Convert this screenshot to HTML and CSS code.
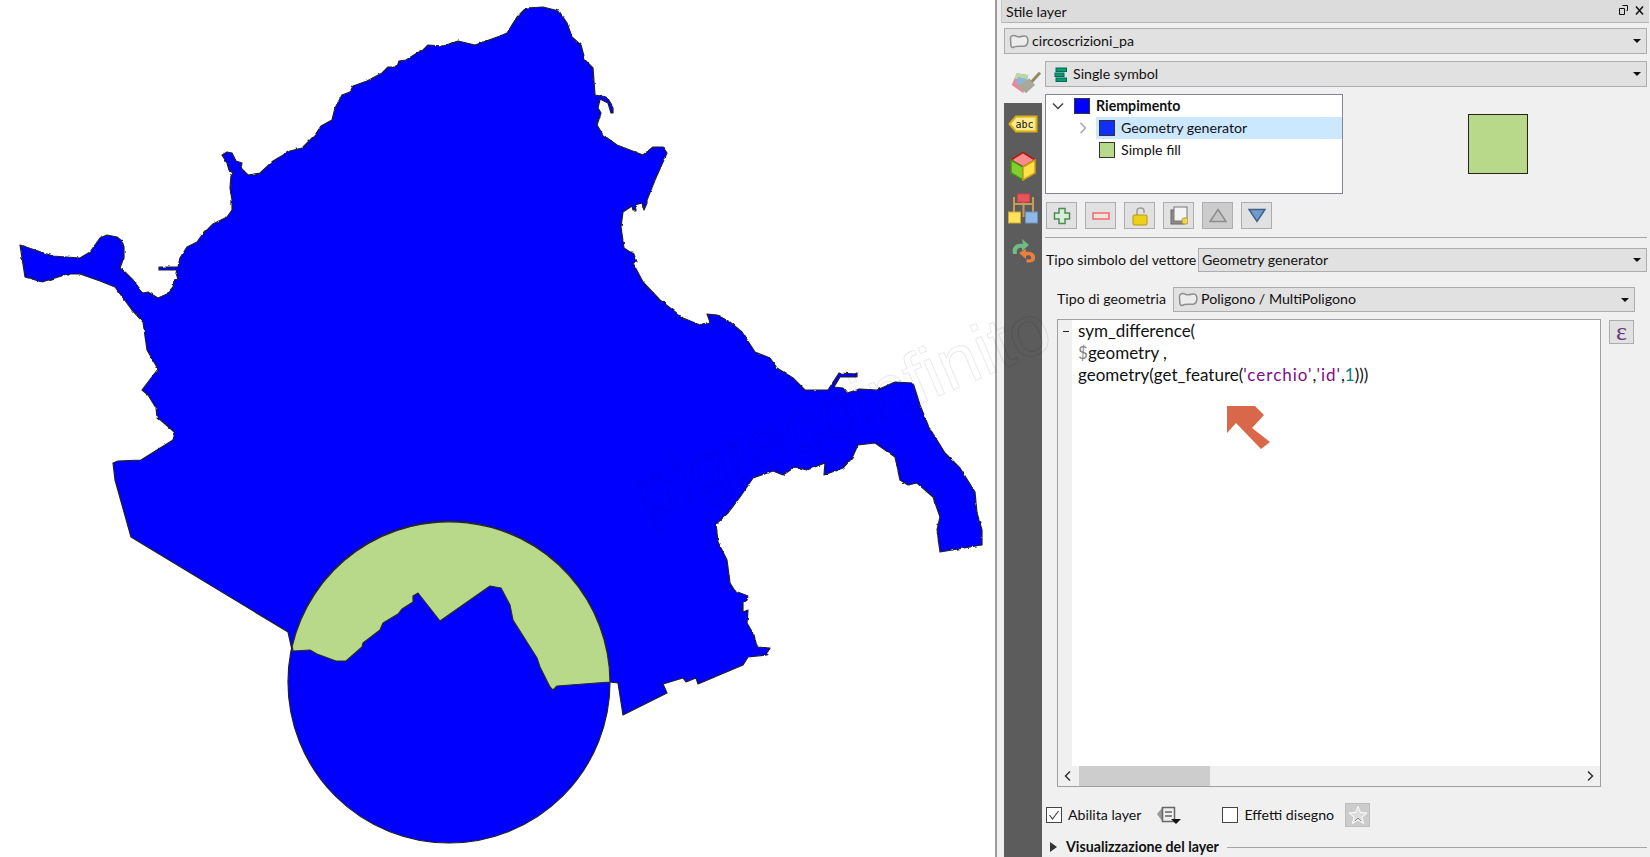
FILE: index.html
```html
<!DOCTYPE html>
<html lang="en">
<head>
    <meta charset="UTF-8">
    <meta name="viewport" content="width=device-width, initial-scale=1.0">
    <title>Stile layer</title>
    <link rel="stylesheet" href="styles.css">
</head>
<body>

    <div class="map-view">
        <svg class="map-svg" width="995" height="857" viewBox="0 0 995 857">
            <defs>
                <path id="district" d="M20 245 L53 256 L80 258 L90 252 L95 245 L100 238 L107 235 L117 237 L122 241 L124 247 L124 257 L120 268 L125 272 L133 280 L143 293 L148 292 L158 298 L167 294 L173 287 L174 280 L178 279 L176 273 L177 270 L159 270 L159 267 L178 267 L180 258 L187 247 L197 242 L202 235 L213 224 L227 217 L232 210 L232 200 L230 188 L231 176 L233 173 L229 170 L227 163 L222 155 L227 152 L232 153 L236 161 L242 163 L241 168 L248 175 L260 173 L273 161 L290 151 L302 148 L315 135 L321 126 L332 120 L335 108 L342 95 L350 92 L353 86 L367 81 L382 73 L388 67 L397 67 L399 61 L406 60 L417 53 L423 50 L428 45 L443 46 L458 41 L475 45 L500 36 L507 33 L517 17 L526 8 L543 7 L559 11 L567 23 L572 37 L581 45 L585 60 L593 68 L595 95 L607 97 L613 107 L613 113 L611 113 L608 103 L600 99 L598 108 L601 113 L597 125 L603 135 L617 145 L643 155 L653 147 L663 147 L667 153 L655 180 L647 200 L647 203 L644 210 L642 203 L635 205 L636 210 L633 210 L632 206 L623 212 L621 227 L624 248 L630 252 L633 252 L637 262 L633 263 L643 282 L660 300 L683 318 L700 325 L710 322 L707 314 L717 315 L730 322 L742 332 L755 352 L770 358 L777 368 L793 378 L805 390 L828 390 L839 373 L857 374 L857 377 L840 377 L834 387 L843 388 L847 393 L860 389 L877 390 L895 382 L913 383 L920 405 L930 430 L932 432 L945 453 L960 468 L975 492 L977 513 L982 530 L982 545 L940 552 L937 530 L940 517 L933 497 L917 483 L908 485 L900 480 L895 457 L875 443 L858 445 L852 458 L843 468 L824 475 L825 463 L807 470 L795 467 L783 475 L773 471 L753 478 L740 497 L728 513 L716 524 L718 542 L727 560 L730 583 L735 591 L748 596 L747 600 L743 603 L743 612 L748 610 L747 623 L754 635 L757 647 L770 648 L767 655 L748 657 L743 665 L698 684 L696 678 L686 682 L683 678 L663 684 L667 693 L623 715 L618 683 L610 682 L292 650 L288 632 L131 537 L115 480 L113 463 L118 461 L141 460 L173 440 L175 433 L172 430 L157 417 L156 408 L148 395 L142 390 L158 369 L147 350 L143 322 L132 310 L115 287 L100 281 L80 274 L68 274 L42 282 L25 277 Z"/>
                <!-- coast is rough, the surveyed borders are straight -->
                <filter id="rough" x="-2%" y="-2%" width="104%" height="104%" color-interpolation-filters="sRGB">
                    <feTurbulence type="fractalNoise" baseFrequency=".18" numOctaves="2" seed="4"/>
                    <feDisplacementMap in="SourceGraphic" scale="2.500" xChannelSelector="R" yChannelSelector="G"/>
                </filter>
                <clipPath id="coast-area"><path d="M0 0H995V857H760V660H600V857H300V455H0Z"/></clipPath>
                <clipPath id="border-area"><path d="M0 455H300V857H0ZM600 660H760V857H600Z"/></clipPath>
            </defs>
            <g clip-path="url(#border-area)"><use class="map-blue" href="#district"/></g>
            <g clip-path="url(#coast-area)"><use class="map-blue" href="#district" filter="url(#rough)"/></g>
            <circle class="map-blue" cx="449" cy="682" r="161"/>
            <!-- the part of the circle left after sym_difference -->
            <path class="map-green" d="M292.200 646.300 A161 161 0 0 1 610 682 L557 686 L553 690 L550 687 L540 667 L537 658 L513 620 L510 605 L501 588 L490 586 L440 621 L418 593 L413 596 L413 602 L402 609 L398 614 L383 623 L380 630 L363 643 L362 647 L346 661 L336 661 L317 654 L310 650 L293 651 Z"/>
        </svg>
    </div>

    <div class="style-dock">
        <div class="dock-title">
            <span>Stile layer</span>
            <svg class="dock-btns" width="28" height="12" viewBox="0 0 28 12">
                <path d="M3.500 .5h5v5h-1M.5 3.500h5v6h-5z" fill="none" stroke="#111"/>
                <path d="M17 1.500l7 8M24 1.500l-7 8" stroke="#111" stroke-width="1.500"/>
            </svg>
        </div>

        <div class="combo layer-combo">
            <svg class="poly-icon" width="20" height="15" viewBox="0 0 20 15"><path d="M1.500 5C1 1 5 1 8 2.500 12 4 15 .5 17.500 2.500 20 5 19 11 16 12 12 13 8 11 4 13.500 1 14 2 8 1.500 5Z"/></svg>
            <span class="txt">circoscrizioni_pa</span>
            <i class="combo-arrow"></i>
        </div>

        <div class="dock-body">
            <div class="tab-strip">
                <div class="tab tab-current">
                    <svg width="36" height="28" viewBox="0 0 36 28">
                        <path d="M6.700 17 L11.700 5.300 L23.300 7 L18.300 25.300Z" fill="#e58a98"/>
                        <path d="M9.500 10.500 L11.700 5.300 L23.300 7 L21.500 13Z" fill="#b6dba0"/>
                        <path d="M11 15 L13 9 L22 11 L20 20Z" fill="#8fb2da"/>
                        <path d="M13.300 18 L24.300 10.300 L30 17 L21 25.300Z" fill="#a9a999"/>
                        <path d="M26.700 13.700 L35 4.700" stroke="#8f8a68" stroke-width="3"/>
                    </svg>
                </div>
                <div class="tab">
                    <svg width="30" height="18" viewBox="0 0 30 18">
                        <path d="M1.500 9 L8 1.500 H28.500 V16.500 H8Z" fill="#fbe98a" stroke="#dcae13" stroke-width="2"/>
                        <text x="7.500" y="12.500" class="abc-text">abc</text>
                    </svg>
                </div>
                <div class="tab">
                    <svg width="28" height="31" viewBox="0 0 28 31">
                        <path d="M14 1.500 L26 9 L14 16 L2 9Z" fill="#fb8c8c" stroke="#b01818" stroke-width="1.500"/>
                        <path d="M2 9 L14 16 V29 L2 22Z" fill="#7fd02e" stroke="#4b8a14" stroke-width="1.500"/>
                        <path d="M26 9 L14 16 V29 L26 22Z" fill="#ffe04a" stroke="#c8a010" stroke-width="1.500"/>
                    </svg>
                </div>
                <div class="tab">
                    <svg width="31" height="31" viewBox="0 0 31 31">
                        <path d="M6 4 V20 M25 4 V20 M6 11 H25 M15.500 9 V24" fill="none" stroke="#c99a52" stroke-width="2"/>
                        <rect x="9.500" y="1" width="12" height="8" fill="#e9545c" stroke="#c44"/>
                        <rect x=".5" y="19" width="12" height="11" fill="#ffe25e" stroke="#d0a92c"/>
                        <rect x="17.500" y="19" width="12" height="11" fill="#8fb8e6" stroke="#6c92c0"/>
                    </svg>
                </div>
                <div class="tab">
                    <svg width="28" height="27" viewBox="0 0 28 27">
                        <path d="M4 17 C2 9 8 6 14 7 L13 2 L20 8 L13 14 L13 11 C9 10 7 13 8 17Z" fill="#6fbb80"/>
                        <path d="M10 16 L17 12 L17 15 C24 14 27 18 26 22 C25 26 20 26 17 25 L18 22 C21 23 23 22 22 20 C21 18 19 18 17 19 L17 22Z" fill="#ec7d3d"/>
                    </svg>
                </div>
            </div>

            <div class="dock-main">
                <div class="combo renderer-combo">
                    <svg class="renderer-icon" width="13" height="15" viewBox="0 0 13 15">
                        <rect x="2" y="1" width="10.500" height="3.500" fill="#08a060" stroke="#066"/>
                        <rect x="1" y="6" width="9" height="3.500" fill="#08a060" stroke="#066"/>
                        <rect x="2" y="11" width="10.500" height="3.500" fill="#08a060" stroke="#066"/>
                    </svg>
                    <span class="txt">Single symbol</span>
                    <i class="combo-arrow"></i>
                </div>

                <div class="symbol-row">
                    <div class="symbol-tree">
                        <div class="tree-row tree-root">
                            <svg class="tree-chevron" width="12" height="8" viewBox="0 0 12 8"><path d="M1 1.500 L6 6.500 L11 1.500" fill="none" stroke="#444" stroke-width="1.500"/></svg>
                            <i class="swatch swatch-root"></i>
                            <b class="txt">Riempimento</b>
                        </div>
                        <div class="tree-row tree-child">
                            <svg class="tree-chevron-side" width="8" height="12" viewBox="0 0 8 12"><path d="M1.500 1 L6.500 6 L1.500 11" fill="none" stroke="#a6a6a6" stroke-width="1.500"/></svg>
                            <div class="tree-label is-selected"><i class="swatch swatch-blue"></i><span class="txt">Geometry generator</span></div>
                        </div>
                        <div class="tree-row tree-child">
                            <div class="tree-label"><i class="swatch swatch-green"></i><span class="txt">Simple fill</span></div>
                        </div>
                    </div>
                    <div class="symbol-preview"><i class="preview-box"></i></div>
                </div>

                <div class="tool-row">
                    <button class="tool-btn">
                        <svg width="18" height="18" viewBox="0 0 18 18"><path d="M6 1.500h6v4.500h4.500v6H12v4.500H6V12H1.500V6H6Z" fill="#d8ecd8" stroke="#4e8a58" stroke-width="1.500"/></svg>
                    </button>
                    <button class="tool-btn">
                        <svg width="18" height="8" viewBox="0 0 18 8"><rect x="1" y="1" width="16" height="6" fill="#fde0e0" stroke="#ee6b72" stroke-width="1.500"/></svg>
                    </button>
                    <button class="tool-btn">
                        <svg width="16" height="20" viewBox="0 0 16 20"><path d="M5 10V5C5 1 12 1 12 5V7" fill="none" stroke="#999" stroke-width="1.500"/><rect x="1" y="9" width="14" height="10" rx="1" fill="#ecd01c" stroke="#b69a10"/></svg>
                    </button>
                    <button class="tool-btn">
                        <svg width="18" height="19" viewBox="0 0 18 19"><rect x="1" y="4" width="13" height="14" fill="#8d8d8d" stroke="#666"/><rect x="4" y="1" width="13" height="14" fill="#f4f4f4" stroke="#777"/><rect x="12" y="12" width="6" height="6" rx="2" fill="#efd35a" stroke="#b89b2a"/></svg>
                    </button>
                    <button class="tool-btn tool-btn-off">
                        <svg width="18" height="15" viewBox="0 0 18 15"><path d="M9 1.500 L17 13.500 H1Z" fill="#c4c4c4" stroke="#8c8c8c" stroke-width="1.500"/></svg>
                    </button>
                    <button class="tool-btn">
                        <svg width="18" height="15" viewBox="0 0 18 15"><path d="M1 1.500 H17 L9 13.500Z" fill="#6f9bd0" stroke="#3d6187" stroke-width="1.500"/></svg>
                    </button>
                </div>

                <div class="dock-line"></div>

                <div class="form-row type-row">
                    <label class="txt">Tipo simbolo del vettore</label>
                    <div class="combo type-combo"><span class="txt">Geometry generator</span><i class="combo-arrow"></i></div>
                </div>

                <div class="form-row geom-row">
                    <label class="txt">Tipo di geometria</label>
                    <div class="combo geom-combo">
                        <svg class="poly-icon" width="20" height="15" viewBox="0 0 20 15"><path d="M1.500 5C1 1 5 1 8 2.500 12 4 15 .5 17.500 2.500 20 5 19 11 16 12 12 13 8 11 4 13.500 1 14 2 8 1.500 5Z"/></svg>
                        <span class="txt">Poligono / MultiPoligono</span>
                        <i class="combo-arrow"></i>
                    </div>
                </div>

                <div class="editor-row">
                    <div class="code-editor">
                        <div class="code-area">
                            <div class="code-gutter"><span class="fold-mark"></span></div>
                            <div class="code-lines">
                                <div>sym_difference(</div>
                                <div><span class="c-var">$</span>geometry ,</div>
                                <div>geometry(get_feature(<span class="c-str">'cerchio'</span>,<span class="c-str">'id'</span>,<span class="c-num">1</span>)))</div>
                            </div>
                        </div>
                        <div class="code-scroll">
                            <svg width="20" height="20" viewBox="0 0 20 20"><path d="M12 5.500 L7.500 10 L12 14.500" fill="none" stroke="#333" stroke-width="1.500"/></svg>
                            <div class="scroll-track"><div class="scroll-thumb"></div></div>
                            <svg width="20" height="20" viewBox="0 0 20 20"><path d="M8 5.500 L12.500 10 L8 14.500" fill="none" stroke="#333" stroke-width="1.500"/></svg>
                        </div>
                    </div>
                    <button class="expr-btn">ε</button>
                </div>

                <div class="option-row">
                    <span class="check-box is-checked">
                        <svg width="14" height="14" viewBox="0 0 14 14"><path d="M2.500 7 L5.500 11 L11.500 3" fill="none" stroke="#444" stroke-width="1.200"/></svg>
                    </span>
                    <label class="option-label txt">Abilita layer</label>
                    <svg class="legend-icon" width="26" height="20" viewBox="0 0 26 20">
                        <path d="M1 9 L6 3 V16Z" fill="#999"/>
                        <rect x="6.500" y="2.500" width="12" height="14" fill="#eee" stroke="#666" stroke-width="1.500"/>
                        <path d="M9 7h7M9 11h7" stroke="#666" stroke-width="1.500"/>
                        <path d="M15 14 H25 L20 19Z" fill="#111"/>
                    </svg>
                    <span class="check-box check-effects"></span>
                    <label class="option-label txt">Effetti disegno</label>
                    <button class="star-btn">
                        <svg width="20" height="20" viewBox="0 0 20 20"><path d="M10 1.500 L12.500 7.500 L19 8 L14 12 L15.500 18.500 L10 15 L4.500 18.500 L6 12 L1 8 L7.500 7.500Z" fill="#ddd" stroke="#fff"/><path d="M7 16l3-3 3 3" fill="none" stroke="#8a8a8a"/></svg>
                    </button>
                </div>

                <div class="group-row">
                    <i class="group-arrow"></i>
                    <b class="txt">Visualizzazione del layer</b>
                    <div class="group-line"></div>
                </div>
            </div>
        </div>
    </div>

    <!-- annotation arrow and faint watermark, drawn over the whole capture -->
    <svg class="overlay" width="1650" height="857" viewBox="0 0 1650 857">
        <text class="watermark" x="647" y="520" transform="rotate(-23 647 520)">pigrecoinfinito</text>
        <path class="note-arrow" d="M1227 406 H1255 L1264 415 L1252 428 L1270 442 L1261 449 L1236 423 L1227 433Z"/>
    </svg>

</body>
</html>
```

FILE: styles.css
```css
body {
    margin: 0;
    width: 1650px;
    height: 857px;
    display: flex;
    overflow: hidden;
    background: white;
    color: #111;
    font-family: Lato, "Open Sans", sans-serif;
    font-size: 14.200px;
}

button {
    padding: 0;
    font-family: inherit;
}

/* Lato sits low in its line box */
.txt {
    padding-bottom: 2px;
}

.map-view {
    width: 995px;
    flex: none;
}

.map-svg {
    display: block;
}

.map-blue {
    fill: #0000ff;
    stroke: #222;
    stroke-width: 1.200;
    stroke-linejoin: round;
}

.map-green {
    fill: #b8d98a;
    stroke: #2a2a2a;
    stroke-width: 1.200;
    stroke-linejoin: round;
}

.style-dock {
    flex: 1;
    background: #f0f0f0;
    border-left: 2px solid #9a9aa0;
}

.dock-title {
    height: 22px;
    margin-left: 4px;
    margin-right: 1px;
    padding: 0 2px 0 4px;
    display: flex;
    align-items: center;
    justify-content: space-between;
    background: #dcdcdc;
    border-bottom: 1px solid #b4b4b4;
    border-left: 1px solid #c8c8c8;
}

.dock-btns {
    display: block;
}

/* combo boxes */
.combo {
    display: flex;
    align-items: center;
    box-sizing: border-box;
    background: #e1e1e1;
    border: 1px solid #adadad;
    padding: 0 5px 0 4px;
}

.combo-arrow {
    margin-left: auto;
    width: 0;
    height: 0;
    border-left: 4px solid transparent;
    border-right: 4px solid transparent;
    border-top: 4px solid #111;
}

.poly-icon {
    flex: none;
    margin-right: 3px;
}

.poly-icon path {
    fill: #ececec;
    stroke: #8e8e8e;
    stroke-width: 1.500;
}

.layer-combo {
    height: 26px;
    margin: 5px 3px 0 7px;
}

.dock-body {
    display: flex;
    margin-top: 7px;
    padding-left: 7px;
}

.tab-strip {
    width: 38px;
    flex: none;
    height: 796px;
    background: #5c5c5c;
}

.tab {
    height: 42px;
    display: flex;
    align-items: center;
    justify-content: center;
}

.tab-current {
    background: #f0f0f0;
}

.abc-text {
    font-family: "DejaVu Sans Mono", monospace;
    font-size: 10px;
    fill: #111;
}

.dock-main {
    width: 602px;
    margin-left: 3px;
}

.renderer-combo {
    height: 26px;
    padding-left: 8px;
}

.renderer-icon {
    margin-right: 6px;
}

/* symbol layers tree */
.symbol-row {
    display: flex;
    margin-top: 7px;
}

.symbol-tree {
    width: 298px;
    height: 100px;
    box-sizing: border-box;
    flex: none;
    background: white;
    border: 1px solid #828790;
}

.tree-row {
    display: flex;
    align-items: center;
    height: 22px;
}

.tree-root {
    height: 22px;
    padding-left: 6px;
}

.tree-chevron {
    margin-right: 10px;
}

.tree-child {
    position: relative;
    padding-left: 50px;
}

.tree-chevron-side {
    position: absolute;
    left: 33px;
    top: 5px;
}

.tree-label {
    flex: 1;
    height: 22px;
    display: flex;
    align-items: center;
    padding-left: 3px;
}

.is-selected {
    background: #cce8ff;
}

.swatch {
    width: 14px;
    height: 14px;
    flex: none;
    margin-right: 6px;
    border: 1px solid #333;
}

.swatch-root {
    background: #0000ff;
    border-color: #334;
}

.swatch-blue {
    background: #1030ff;
}

.swatch-green {
    background: #b8d98a;
}

.symbol-preview {
    flex: 1;
    display: flex;
    align-items: center;
    justify-content: center;
    padding-left: 6px;
}

.preview-box {
    width: 58px;
    height: 58px;
    background: #b8d98a;
    border: 1.500px solid #222;
}

.tool-row {
    display: flex;
    gap: 8px;
    margin: 8px 0 0 1px;
}

.tool-btn {
    width: 31px;
    height: 27px;
    display: flex;
    align-items: center;
    justify-content: center;
    background: #e1e1e1;
    border: 1px solid #adadad;
}

.tool-btn-off {
    background: #cccccc;
}

.dock-line {
    height: 1px;
    margin-top: 8px;
    background: #a5a5a5;
}

.form-row {
    display: flex;
    align-items: center;
}

.type-row {
    margin: 10px 0 0 1px;
}

.type-combo {
    width: 449px;
    height: 24px;
    margin-left: auto;
    padding-left: 3px;
}

.geom-row {
    margin: 15px 12px 0 12px;
}

.geom-combo {
    width: 462px;
    height: 25px;
    margin-left: auto;
}

/* expression editor */
.editor-row {
    display: flex;
    margin: 7px 0 0 12px;
}

.code-editor {
    width: 544px;
    height: 468px;
    box-sizing: border-box;
    display: flex;
    flex-direction: column;
    background: white;
    border: 1px solid #a0a0a0;
}

.code-area {
    flex: 1;
    display: flex;
}

.code-gutter {
    width: 14px;
    background: #f0f0f0;
    padding-top: 11px;
    box-sizing: border-box;
}

.fold-mark {
    display: block;
    width: 6px;
    height: 1px;
    margin-left: 5px;
    background: #222;
}

.code-lines {
    padding: 0 0 0 6px;
    font-size: 17px;
    line-height: 22px;
}

.c-var {
    color: #888;
}

.c-str {
    color: #800a8a;
    letter-spacing: 1px;
}

.c-num {
    color: #0a7f80;
}

.code-scroll {
    height: 20px;
    display: flex;
    background: #f0f0f0;
}

.scroll-track {
    flex: 1;
}

.scroll-thumb {
    width: 131px;
    height: 20px;
    margin-left: 1px;
    background: #cdcdcd;
}

.expr-btn {
    width: 25px;
    height: 24px;
    margin: 1px 0 0 8px;
    background: #e1e1e1;
    border: 1px solid #adadad;
    font-family: "Liberation Serif", serif;
    font-size: 26px;
    line-height: 20px;
    color: #6a3a80;
}

.option-row {
    display: flex;
    align-items: center;
    height: 24px;
    margin: 16px 0 0 1px;
}

.check-box {
    width: 16px;
    height: 16px;
    box-sizing: border-box;
    display: flex;
    align-items: center;
    justify-content: center;
    background: white;
    border: 1px solid #444;
}

.option-label {
    margin-left: 6px;
}

.legend-icon {
    margin-left: 15px;
}

.check-effects {
    margin-left: 40px;
}

.star-btn {
    width: 25px;
    height: 24px;
    margin-left: 11px;
    display: flex;
    align-items: center;
    justify-content: center;
    background: #cccccc;
    border: 1px solid #bdbdbd;
}

.group-row {
    display: flex;
    align-items: center;
    height: 20px;
    margin: 10px 0 0 5px;
}

.group-arrow {
    width: 0;
    height: 0;
    margin-right: 9px;
    border-left: 7px solid #333;
    border-top: 5px solid transparent;
    border-bottom: 5px solid transparent;
}

.group-line {
    flex: 1;
    height: 1px;
    margin-left: 8px;
    background: #a5a5a5;
}

.overlay {
    position: absolute;
    left: 0;
    top: 0;
    pointer-events: none;
}

.watermark {
    font-family: "Liberation Sans", sans-serif;
    font-size: 72px;
    fill: none;
    stroke: rgba(0, 0, 0, .09);
    stroke-width: 1;
}

.note-arrow {
    fill: #d9674a;
}
```
